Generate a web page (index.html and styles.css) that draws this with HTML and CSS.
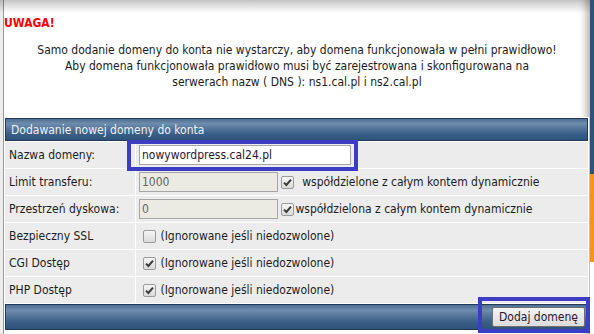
FILE: index.html
```html
<!DOCTYPE html>
<html lang="pl">
<head>
<meta charset="utf-8">
<title>Dodawanie domeny</title>
<link rel="stylesheet" href="styles.css">
</head>
<body>
<div class="screen">
  <div class="main">
    <div class="notice">
      <div class="uwaga">UWAGA!</div>
      <p class="msg">Samo dodanie domeny do konta nie wystarczy, aby domena funkcjonowała w pełni prawidłowo!<br>Aby domena funkcjonowała prawidłowo musi być zarejestrowana i skonfigurowana na<br>serwerach nazw ( DNS ): ns1.cal.pl i ns2.cal.pl</p>
    </div>
    <table class="form">
      <thead>
        <tr><th colspan="2" class="bar head">Dodawanie nowej domeny do konta</th></tr>
      </thead>
      <tbody>
        <tr class="r1">
          <td class="lbl">Nazwa domeny:</td>
          <td class="val"><span class="mark mark-input"><input class="txt" type="text" value="nowywordpress.cal24.pl"></span></td>
        </tr>
        <tr>
          <td class="lbl">Limit transferu:</td>
          <td class="val"><input class="txt dis" type="text" value="1000" disabled> <span class="cb"><svg viewBox="0 0 13 13" width="13" height="13"><path d="M3 6.6 L5.4 9 L10 3.6" fill="none" stroke="#3a3a3a" stroke-width="2"/></svg></span> &nbsp;współdzielone z całym kontem dynamicznie</td>
        </tr>
        <tr>
          <td class="lbl">Przestrzeń dyskowa:</td>
          <td class="val"><input class="txt dis" type="text" value="0" disabled> <span class="cb"><svg viewBox="0 0 13 13" width="13" height="13"><path d="M3 6.6 L5.4 9 L10 3.6" fill="none" stroke="#3a3a3a" stroke-width="2"/></svg></span>współdzielona z całym kontem dynamicznie</td>
        </tr>
        <tr>
          <td class="lbl">Bezpieczny SSL</td>
          <td class="val"><span class="cb cb-first"></span> (Ignorowane jeśli niedozwolone)</td>
        </tr>
        <tr>
          <td class="lbl">CGI Dostęp</td>
          <td class="val"><span class="cb cb-first"><svg viewBox="0 0 13 13" width="13" height="13"><path d="M3 6.6 L5.4 9 L10 3.6" fill="none" stroke="#3a3a3a" stroke-width="2"/></svg></span> (Ignorowane jeśli niedozwolone)</td>
        </tr>
        <tr>
          <td class="lbl">PHP Dostęp</td>
          <td class="val"><span class="cb cb-first"><svg viewBox="0 0 13 13" width="13" height="13"><path d="M3 6.6 L5.4 9 L10 3.6" fill="none" stroke="#3a3a3a" stroke-width="2"/></svg></span> (Ignorowane jeśli niedozwolone)</td>
        </tr>
      </tbody>
      <tfoot>
        <tr><td colspan="2" class="bar foot"><span class="mark mark-btn"><button class="btn" type="button">Dodaj domenę</button></span></td></tr>
      </tfoot>
    </table>
  </div>
  <div class="stripe"><div class="s-blue"></div><div class="s-orange"></div></div>
</div>
</body>
</html>
```

FILE: styles.css
```css
* { box-sizing: border-box; }
html, body { margin: 0; padding: 0; background: #fff; }
body {
  width: 594px;
  height: 334px;
  overflow: hidden;
  font-family: "DejaVu Sans Condensed", "DejaVu Sans", sans-serif;
  font-size: 12px;
  color: #1c1c1c;
}
.screen {
  display: flex;
  height: 334px;
  position: relative;
  padding-left: 3px;
  background: #ececec;
}
.screen::before {
  content: "";
  position: absolute;
  left: 0; top: 0; right: 4px;
  height: 13px;
  background: linear-gradient(rgba(0,0,0,0.22), rgba(0,0,0,0));
  pointer-events: none;
}
.main {
  width: 587px;
  height: 334px;
  background: #fff;
  border-left: 1px solid #9a9a9a;
  box-shadow: inset -9px 0 9px -6px rgba(0,0,0,0.35);
}
.stripe {
  width: 4px;
  display: flex;
  flex-direction: column;
  background: #fff;
}
.s-blue { height: 174px; background: #2f5378; }
.s-orange { height: 88px; background: #f7941d; }

.notice { height: 117px; padding-top: 15px; }
.uwaga {
  color: #ff0000;
  font-weight: bold;
  line-height: 16px;
  padding-left: 0;
}
.msg {
  margin: 11px 0 0;
  text-align: center;
  line-height: 16px;
}

.form {
  width: 585px;
  border-spacing: 1px;
  border-collapse: separate;
  background: #fff;
}
.bar {
  background: linear-gradient(#4e6d91 0%, #6f8dad 22%, #55769b 45%, #3b5f87 70%, #2e5379 100%);
  border: 1px solid #1f3a5a;
}
.head {
  height: 23px;
  padding: 0 0 0 5px;
  text-align: left;
  font-weight: normal;
  color: #eef2f7;
}
.foot {
  height: 26px;
  padding: 0 2px 0 0;
  text-align: right;
  vertical-align: middle;
}
.lbl, .val {
  background: #ececec;
  height: 26px;
  vertical-align: middle;
  white-space: nowrap;
}
.lbl { width: 130px; padding: 0 0 0 4px; }
.val { padding: 0 0 0 3px; }

.txt {
  font-family: inherit;
  font-size: 12px;
  height: 20px;
  border: 1px solid #a5a5a5;
  background: #fff;
  color: #2a1630;
  padding: 0 2px;
  margin: 0;
  vertical-align: middle;
  width: 212px;
}
.txt.dis {
  width: 139px;
  background: #ebebe4;
  color: #6d6258;
}
.mark { position: relative; display: inline-block; vertical-align: middle; }
.mark::after {
  content: "";
  position: absolute;
  border: 4px solid #3d3dc4;
  pointer-events: none;
}
.mark-input { margin-left: 0; }
.mark-input::after { left: -12px; top: -5px; right: -7px; bottom: -6px; }
.mark-btn::after { left: -14px; top: -10px; right: -5px; bottom: -6px; }

.cb {
  display: inline-block;
  width: 13px;
  height: 13px;
  border: 1px solid #9a9a9a;
  border-radius: 2px;
  background: linear-gradient(#f6f6f6, #dadada);
  vertical-align: middle;
  position: relative;
  margin: 0 1px 0 0;
}
.cb svg { position: absolute; left: -1px; top: -1px; }
.cb-first { margin-left: 4px; }

.btn {
  font-family: inherit;
  font-size: 12px;
  color: #2a1630;
  width: 93px;
  height: 20px;
  padding: 0;
  border: 1px solid #707070;
  border-radius: 2px;
  background: linear-gradient(#f4f4f4, #dcdcdc);
  vertical-align: middle;
}
```
